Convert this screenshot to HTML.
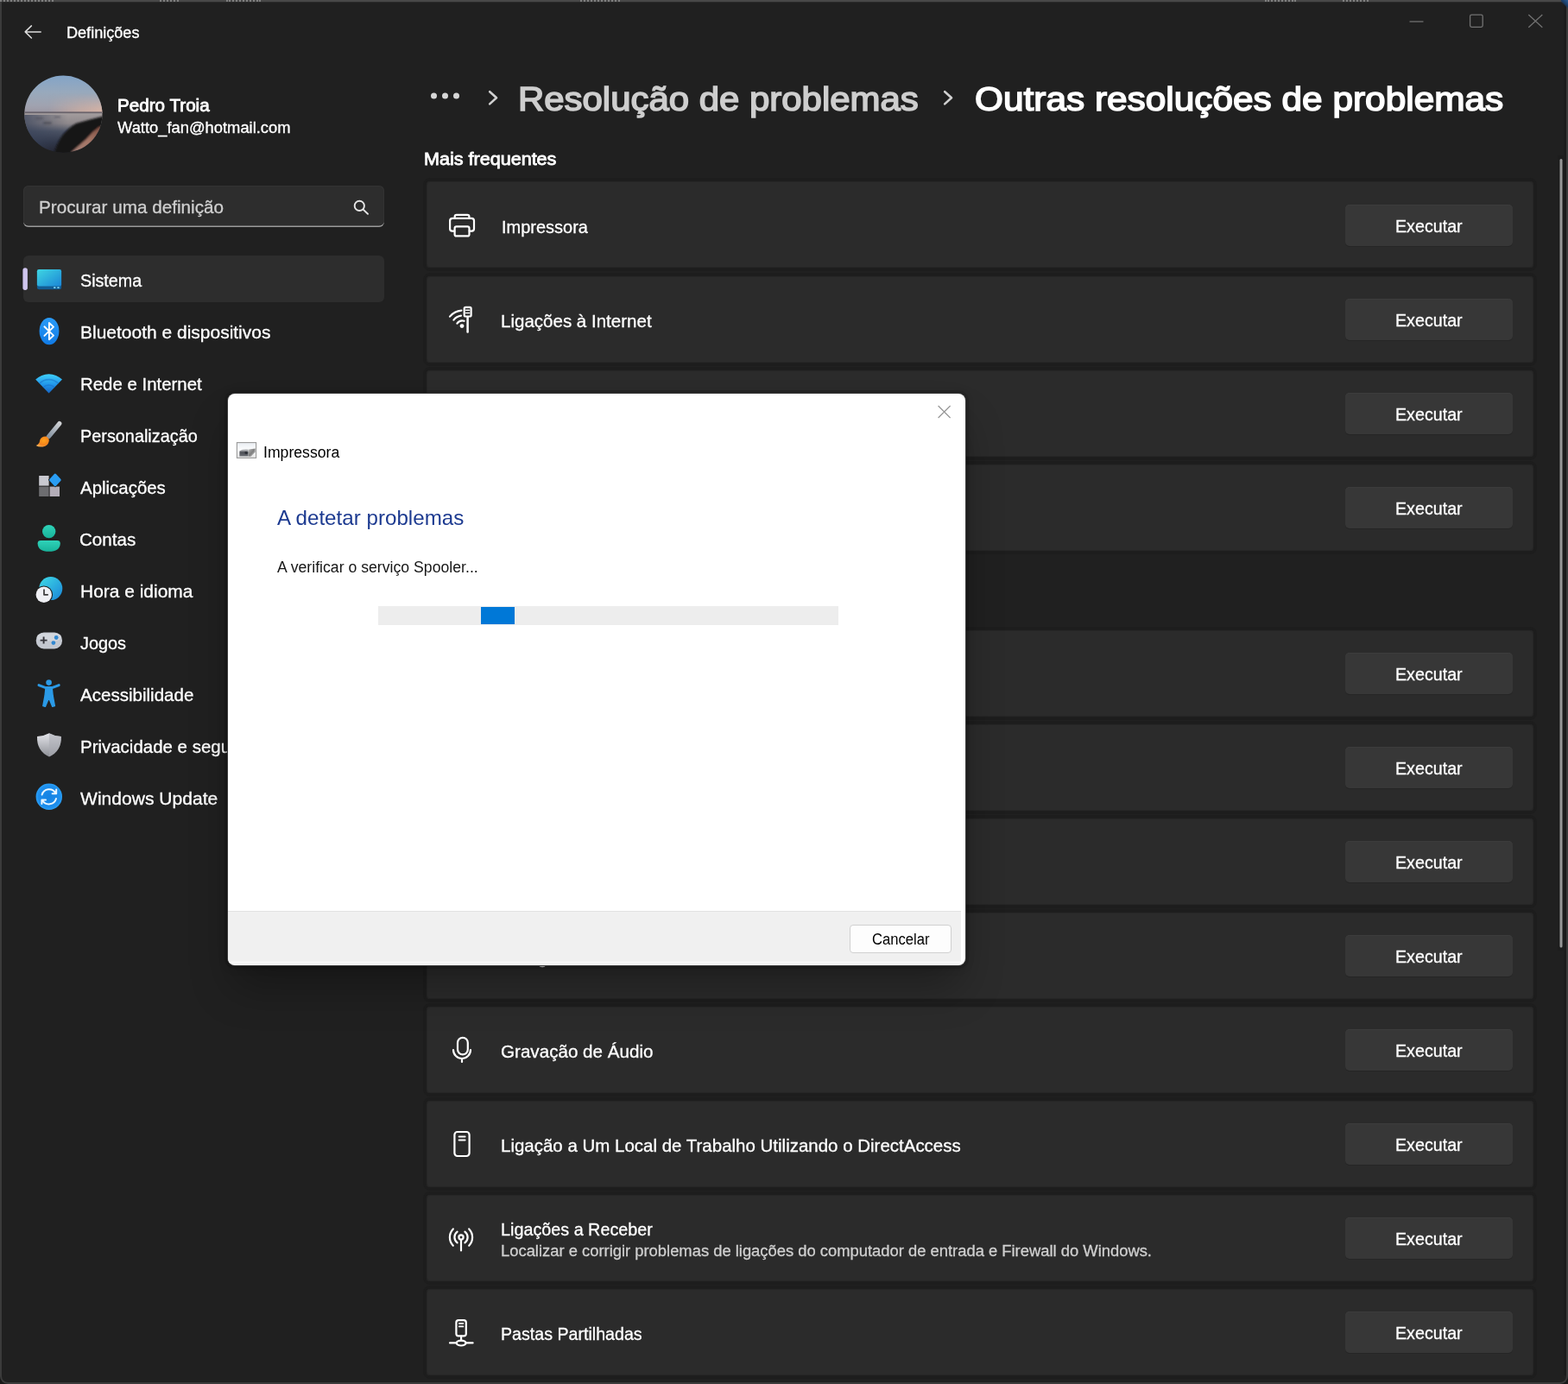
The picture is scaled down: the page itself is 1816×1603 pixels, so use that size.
<!DOCTYPE html>
<html lang="pt-PT"><head><meta charset="utf-8"><title>Definições - Outras resoluções de problemas</title>
<style>
html,body{margin:0;padding:0}
body{width:1816px;height:1603px;overflow:hidden;background:#181818;font-family:"Liberation Sans",sans-serif;position:relative}
ul,li,h1,h2,h3,p{margin:0;padding:0;list-style:none;font-weight:400}
.t{position:absolute;margin:0;white-space:nowrap;line-height:1;font-weight:400;transform-origin:0 0}
.abs{position:absolute}
button{position:absolute;margin:0;padding:0;border:0;background:none;font:inherit;color:inherit;text-align:left}
.card{position:absolute;left:494px;width:1282px;height:100px;background:#2b2b2b;border-radius:4px;box-shadow:inset 0 0 0 1px #262626,0 0 0 1px #1e1e1e,0 0 0 4px #1d1d1d}
.btn{left:1558px;width:194px;height:48px;background:#373737;border-radius:5px;box-shadow:inset 0 1px 0 #3c3c3c,0 1px 0 #252525}
svg.ov{position:absolute;left:0;top:0;pointer-events:none}
svg.defs{position:absolute;width:0;height:0}
.frame{left:0;top:0;width:1816px;height:1603px;box-sizing:border-box;border:2px solid #3b3b3b;border-top-color:#484848;border-radius:0 0 9px 9px;background:#202020}
.noise{top:0;height:3px;border-top:2px dotted #999;box-sizing:border-box;opacity:.7}
.selbg{left:27px;top:296px;width:418px;height:54px;background:#2d2d2d;border-radius:6px}
.searchbox{left:27px;top:215px;width:418px;height:48px;background:#2d2d2d;border-radius:6px;box-shadow:inset 0 -2px 0 -0.5px #9a9a9a, inset 0 0 0 1px #333}
.dialog{position:absolute;left:264px;top:456px;width:854px;height:662px;background:#fff;border-radius:8px;box-shadow:0 0 0 1px #3a3a3a,0 0 0 4px rgba(0,0,0,.1),0 2px 10px 2px rgba(0,0,0,.12),0 30px 50px -6px rgba(0,0,0,.3);overflow:hidden}
.dfoot{left:0;top:599px;width:849px;height:58px;background:#f0f0f0;border-top:1px solid #e2e2e2;border-bottom:1px solid #fff;box-shadow:0 2px 0 -1px #ececec}
.track{left:174px;top:246px;width:533px;height:22px;background:#ededed}
.chunk{left:119px;top:1px;width:39px;height:20px;background:#0078d7}
.cancel{left:720px;top:615px;width:116px;height:31px;background:#fdfdfd;border:1px solid #d0d0d0;border-radius:4px;box-sizing:content-box}
</style></head><body>
<svg class="defs" aria-hidden="true"><defs>
<linearGradient id="gSys" x1="0" y1="0" x2="1" y2="1"><stop offset="0" stop-color="#3fd6e2"/><stop offset="1" stop-color="#1b86d6"/></linearGradient>
<linearGradient id="gBt" x1="0" y1="0" x2="0" y2="1"><stop offset="0" stop-color="#2a9bf7"/><stop offset="1" stop-color="#117be6"/></linearGradient>
<linearGradient id="gWifi" x1="0" y1="0" x2="0" y2="1"><stop offset="0" stop-color="#3fd0fa"/><stop offset=".55" stop-color="#2196ea"/><stop offset="1" stop-color="#1766c4"/></linearGradient>
<linearGradient id="gAcc" x1="0" y1="0" x2="0" y2="1"><stop offset="0" stop-color="#2fd3b9"/><stop offset="1" stop-color="#18b39a"/></linearGradient>
<linearGradient id="gGlobe" x1="0" y1="0" x2="1" y2="1"><stop offset="0" stop-color="#3fdce6"/><stop offset="1" stop-color="#1a84d8"/></linearGradient>
<linearGradient id="gShield" x1="0" y1="0" x2="0" y2="1"><stop offset="0" stop-color="#e4e5ea"/><stop offset="1" stop-color="#8e9097"/></linearGradient>
<linearGradient id="gBrush" gradientUnits="userSpaceOnUse" x1="69" y1="490" x2="56" y2="506"><stop offset="0" stop-color="#cfd1d4"/><stop offset="1" stop-color="#8391a0"/></linearGradient>
<radialGradient id="gTip" cx=".6" cy=".4" r=".7"><stop offset="0" stop-color="#ffa21c"/><stop offset=".6" stop-color="#f5821c"/><stop offset="1" stop-color="#ffb75a"/></radialGradient>
<radialGradient id="gUpd" cx=".5" cy=".5" r=".5"><stop offset="0" stop-color="#1482e2"/><stop offset=".8" stop-color="#1c8dec"/><stop offset="1" stop-color="#2a9ff5"/></radialGradient>

<clipPath id="cAv"><ellipse cx="73.4" cy="132.3" rx="45.1" ry="44.7"/></clipPath>
<linearGradient id="gSky" x1="0" y1="0" x2="0" y2="1"><stop offset="0" stop-color="#82a4c8"/><stop offset=".45" stop-color="#98a9bc"/><stop offset=".8" stop-color="#a0a3b0"/><stop offset="1" stop-color="#9d97a2"/></linearGradient>
<linearGradient id="gGlow" x1="0" y1="0" x2="1" y2="0"><stop offset=".3" stop-color="#d9b3a0" stop-opacity="0"/><stop offset=".7" stop-color="#d6b2a2" stop-opacity=".75"/><stop offset="1" stop-color="#e2b9a6" stop-opacity=".95"/></linearGradient>
<linearGradient id="gGlowV" x1="0" y1="0" x2="0" y2="1"><stop offset="0" stop-color="#000" stop-opacity="1"/><stop offset=".5" stop-color="#000" stop-opacity="0"/></linearGradient>
<linearGradient id="gWat" x1="0" y1="0" x2="0" y2="1"><stop offset="0" stop-color="#a59e9f"/><stop offset=".26" stop-color="#8f898c"/><stop offset=".45" stop-color="#4e5566"/><stop offset=".72" stop-color="#2e3445"/><stop offset="1" stop-color="#1b1a22"/></linearGradient>
<linearGradient id="gWatL" x1="0" y1="0" x2="1" y2="0"><stop offset="0" stop-color="#39435a" stop-opacity=".75"/><stop offset=".55" stop-color="#39435a" stop-opacity="0"/></linearGradient>
<linearGradient id="gPath" x1="1" y1="0" x2="0" y2="1"><stop offset="0" stop-color="#7a4a3e"/><stop offset=".5" stop-color="#a57666"/><stop offset="1" stop-color="#a07c74"/></linearGradient>
<filter id="fAv" x="-10%" y="-10%" width="120%" height="120%"><feGaussianBlur stdDeviation=".8"/></filter>
<mask id="mGlow"><rect x="28" y="108" width="92" height="23" fill="url(#gMaskV)"/></mask>
<linearGradient id="gMaskV" x1="0" y1="0" x2="0" y2="1"><stop offset="0" stop-color="#000"/><stop offset="1" stop-color="#fff"/></linearGradient>

<linearGradient id="gPi" x1="0" y1="0" x2="0" y2="1"><stop offset="0" stop-color="#e9edf2"/><stop offset=".45" stop-color="#fbfcfd"/><stop offset="1" stop-color="#e4e4e4"/></linearGradient>
<linearGradient id="gPd" x1="0" y1="0" x2="0" y2="1"><stop offset="0" stop-color="#8a8d92" stop-opacity=".25"/><stop offset=".45" stop-color="#4a4d53"/><stop offset="1" stop-color="#6d7076"/></linearGradient>
<linearGradient id="gPs" x1="0" y1="0" x2="1" y2="1"><stop offset="0" stop-color="#b9b9b9"/><stop offset=".5" stop-color="#7f7f7f"/><stop offset="1" stop-color="#d8d8d8"/></linearGradient>
<filter id="fB" x="-20%" y="-20%" width="140%" height="140%"><feGaussianBlur stdDeviation=".55"/></filter>
</defs></svg>
<div class="window">
<div class="abs frame"></div>
<div class="abs" style="left:2px;top:2px;width:1812px;height:1px;background:#2b2b2b"></div>
<div class="abs noise" style="left:0px;width:62px"></div>
<div class="abs noise" style="left:185px;width:22px"></div>
<div class="abs noise" style="left:262px;width:40px"></div>
<div class="abs noise" style="left:672px;width:46px"></div>
<div class="abs noise" style="left:1465px;width:36px"></div>
<div class="abs noise" style="left:1555px;width:30px"></div>
<div class="abs" style="left:1811px;top:3px;width:3px;height:1590px;background:#1c1c1c"></div>
<div class="abs" style="left:1808px;top:0;width:8px;height:10px;background:linear-gradient(225deg,#2a5f9a 0,#1b3a60 45%,rgba(32,32,32,0) 60%)"></div>
<header class="titlebar">
<svg class="ov" role="img" aria-label="Voltar" width="1816" height="1603" viewBox="0 0 1816 1603"><g fill="none" stroke="#dcdcdc" stroke-width="1.5" stroke-linecap="round" stroke-linejoin="round">
<path d="M29.2 36.9H47.2M36.4 29.9L29.2 36.9L36.4 44"/>
</g></svg>
<span class="t" style="left:76.60px;top:29px;font-size:18px;color:#fff;-webkit-text-stroke:0.3px #fff;transform:scaleX(1.0048)">Definições</span>
<svg class="ov" role="img" aria-label="Minimizar Maximizar Fechar" width="1816" height="1603" viewBox="0 0 1816 1603"><g fill="none" stroke="#727272" stroke-width="1.3">
<path d="M1632.5 25H1648.5"/>
<rect x="1702.6" y="17.2" width="14.6" height="14.2" rx="1.8"/>
<path d="M1770.3 17L1786.3 31.8M1786.3 17L1770.3 31.8"/>
</g></svg>
</header>
<aside class="sidebar">
<section class="profile"><svg class="ov" role="img" aria-label="Pedro Troia" width="1816" height="1603" viewBox="0 0 1816 1603"><g clip-path="url(#cAv)">
<rect x="28" y="87" width="92" height="44" fill="url(#gSky)"/>
<rect x="28" y="108" width="92" height="23" fill="url(#gGlow)" mask="url(#mGlow)"/>
<rect x="28" y="130.4" width="92" height="48" fill="url(#gWat)"/>
<rect x="28" y="133" width="92" height="45" fill="url(#gWatL)"/>
<rect x="28" y="129.4" width="92" height="1.8" fill="#5d5862" opacity=".85"/>
<g filter="url(#fAv)">
<path d="M120 134.6Q104 138.6 88 143Q77 149.4 70.4 159.4Q65.6 167 62.6 178H120Z" fill="#141415"/>
<path d="M120 147.4L115.4 146.6Q106.4 153 99.6 161.6L82 176.8H92Q104 168.6 112.6 159.4Q117.4 153.4 120 147.4Z" fill="url(#gPath)"/>
<path d="M50 141.4H59.6V143.6H50ZM41 136.4H50V137.6H41ZM63 135H70V136H63Z" fill="#3a3c48" opacity=".75"/>
</g>
</g></svg><div class="t" style="left:135.88px;top:112px;font-size:20.2px;color:#fff;-webkit-text-stroke:0.81px #fff;transform:scaleX(1.0221)">Pedro Troia</div><div class="t" style="left:136.40px;top:139px;font-size:18px;color:#fff;-webkit-text-stroke:0.3px #fff;transform:scaleX(1.0194)">Watto_fan@hotmail.com</div></section>
<div class="search" role="search"><div class="abs searchbox"></div><span class="t" style="left:44.61px;top:229px;font-size:21px;color:#cfcfcf;-webkit-text-stroke:0.3px #cfcfcf;transform:scaleX(0.9861)">Procurar uma definição</span><svg class="ov" aria-hidden="true" width="1816" height="1603" viewBox="0 0 1816 1603"><g fill="none" stroke="#e6e6e6" stroke-width="1.9" stroke-linecap="round">
<circle cx="416.3" cy="238.4" r="5.6"/><path d="M420.6 242.6L426 247.8"/>
</g></svg></div>
<nav aria-label="Definições"><ul>
<li><div class="abs selbg"></div><svg class="ov" aria-hidden="true" width="1816" height="1603" viewBox="0 0 1816 1603"><rect x="26.4" y="310.2" width="5.5" height="25.8" rx="2.7" fill="#cfc5ee"/></svg><svg class="ov" aria-hidden="true" width="1816" height="1603" viewBox="0 0 1816 1603"><rect x="42.9" y="312.1" width="28.2" height="23.2" rx="2.4" fill="#125d94"/>
<rect x="42.9" y="312.1" width="28.2" height="19.3" rx="2.2" fill="url(#gSys)"/>
<rect x="62" y="332.2" width="2.6" height="1.8" rx=".8" fill="#7fd7f5"/><rect x="66.2" y="332.2" width="2.6" height="1.8" rx=".8" fill="#7fd7f5"/></svg><a class="t" style="left:92.76px;top:314px;font-size:21px;color:#fff;-webkit-text-stroke:0.3px #fff;transform:scaleX(0.9382)">Sistema</a></li>
<li><svg class="ov" aria-hidden="true" width="1816" height="1603" viewBox="0 0 1816 1603"><ellipse cx="57" cy="383.6" rx="11.4" ry="15.6" fill="url(#gBt)"/>
<path d="M51.4 378.3L62 388.6L56.9 393.2V374L62 378.6L51.4 388.9" fill="none" stroke="#fff" stroke-width="1.9" stroke-linejoin="round" stroke-linecap="round"/></svg><a class="t" style="left:93.30px;top:374px;font-size:21px;color:#fff;-webkit-text-stroke:0.3px #fff;transform:scaleX(0.9991)">Bluetooth e dispositivos</a></li>
<li><svg class="ov" aria-hidden="true" width="1816" height="1603" viewBox="0 0 1816 1603"><path d="M56.6 455.4L41.2 439.6A21.8 21.8 0 0 1 72 439.6Z" fill="url(#gWifi)"/>
<path d="M45.6 444.2A15.6 15.6 0 0 1 67.6 444.2M50 448.7A9.4 9.4 0 0 1 63.2 448.7" fill="none" stroke="#1a6fc8" stroke-opacity=".55" stroke-width="1.6"/></svg><a class="t" style="left:93.33px;top:434px;font-size:21px;color:#fff;-webkit-text-stroke:0.3px #fff;transform:scaleX(0.9722)">Rede e Internet</a></li>
<li><svg class="ov" aria-hidden="true" width="1816" height="1603" viewBox="0 0 1816 1603"><path d="M68.8 490.6L56.4 505.6" fill="none" stroke="url(#gBrush)" stroke-width="5.2" stroke-linecap="round"/>
<path d="M53.4 505.4Q57.6 507.4 56.6 511.6Q55.4 516.6 49.6 517.4Q45 518 41.6 516Q45.4 514.6 46 511Q47 505 53.4 505.4Z" fill="url(#gTip)"/></svg><a class="t" style="left:93.05px;top:494px;font-size:21px;color:#fff;-webkit-text-stroke:0.3px #fff;transform:scaleX(0.9451)">Personalização</a></li>
<li><svg class="ov" aria-hidden="true" width="1816" height="1603" viewBox="0 0 1816 1603"><rect x="45.2" y="551" width="11.4" height="11.6" fill="#c9c9d0"/>
<rect x="45.2" y="563.6" width="11.4" height="11.4" fill="#6d6d70"/>
<rect x="57.6" y="563.6" width="11.4" height="11.4" fill="#b3adb8"/>
<path d="M64 547L72.2 555.8L64 564.6L55.8 555.8Z" fill="#202020"/><path d="M63.9 550.4L69 555.9L63.9 561.4L58.8 555.9Z" fill="#2a9df4" stroke="#2a9df4" stroke-width="3.4" stroke-linejoin="round"/></svg><a class="t" style="left:92.90px;top:554px;font-size:21px;color:#fff;-webkit-text-stroke:0.3px #fff;transform:scaleX(0.9733)">Aplicações</a></li>
<li><svg class="ov" aria-hidden="true" width="1816" height="1603" viewBox="0 0 1816 1603"><circle cx="56.7" cy="615.6" r="7.7" fill="url(#gAcc)"/>
<path d="M47.4 626H66Q69.8 626 69.8 629.4Q69.4 638.8 56.7 638.8Q44 638.8 43.6 629.4Q43.6 626 47.4 626Z" fill="url(#gAcc)"/></svg><a class="t" style="left:92.22px;top:614px;font-size:21px;color:#fff;-webkit-text-stroke:0.3px #fff;transform:scaleX(0.9800)">Contas</a></li>
<li><svg class="ov" aria-hidden="true" width="1816" height="1603" viewBox="0 0 1816 1603"><circle cx="58.8" cy="681.6" r="13.5" fill="url(#gGlobe)"/>
<circle cx="50.8" cy="688.8" r="10.3" fill="#202020"/>
<circle cx="50.8" cy="688.8" r="9.2" fill="#eff0f4"/>
<path d="M51 683V688.8H55.2" fill="none" stroke="#3a3a3a" stroke-width="1.7" stroke-linecap="round" stroke-linejoin="round"/></svg><a class="t" style="left:93.30px;top:674px;font-size:21px;color:#fff;-webkit-text-stroke:0.3px #fff;transform:scaleX(0.9977)">Hora e idioma</a></li>
<li><svg class="ov" aria-hidden="true" width="1816" height="1603" viewBox="0 0 1816 1603"><rect x="41.8" y="732.6" width="30.2" height="18.8" rx="9" fill="#c4c8d0"/>
<rect x="42.6" y="733.4" width="28.6" height="9" rx="8" fill="#d9dce2" opacity=".7"/>
<path d="M46.6 741.6H54.6M50.6 737.6V745.6" stroke="#34343a" stroke-width="1.9" fill="none"/>
<circle cx="65.2" cy="738.5" r="2.4" fill="#3388d0"/><circle cx="61.9" cy="744.6" r="2.4" fill="#3388d0"/></svg><a class="t" style="left:93.00px;top:734px;font-size:21px;color:#fff;-webkit-text-stroke:0.3px #fff;transform:scaleX(0.9464)">Jogos</a></li>
<li><svg class="ov" aria-hidden="true" width="1816" height="1603" viewBox="0 0 1816 1603"><g fill="#2b9ae6" stroke="#2b9ae6" stroke-linejoin="round" stroke-linecap="round">
<circle cx="56.6" cy="790.6" r="3.3" stroke="none"/>
<path d="M45 793.6L53 796.6H60.2L68.2 793.6" fill="none" stroke-width="3"/>
<path d="M53 796.6H60.2L61.2 806L63.4 817.6L60.8 818.4L56.6 808.4L52.4 818.4L49.8 817.6L52 806Z" stroke-width="1.4"/>
</g></svg><a class="t" style="left:92.90px;top:794px;font-size:21px;color:#fff;-webkit-text-stroke:0.3px #fff;transform:scaleX(0.9784)">Acessibilidade</a></li>
<li><svg class="ov" aria-hidden="true" width="1816" height="1603" viewBox="0 0 1816 1603"><path d="M56.9 849.2Q63.6 852.8 70.8 853Q71.4 870 56.9 876.4Q42.4 870 43 853Q50.2 852.8 56.9 849.2Z" fill="url(#gShield)"/>
<path d="M56.9 849.2Q63.6 852.8 70.8 853Q71.4 870 56.9 876.4Z" fill="#a9abb2" opacity=".55"/></svg><a class="t" style="left:93.33px;top:854px;font-size:21px;color:#fff;-webkit-text-stroke:0.3px #fff;transform:scaleX(0.9745)">Privacidade e segurança</a></li>
<li><svg class="ov" aria-hidden="true" width="1816" height="1603" viewBox="0 0 1816 1603"><circle cx="56.8" cy="922.8" r="15.2" fill="url(#gUpd)"/>
<g fill="none" stroke="#e9f6ff" stroke-width="2" stroke-linecap="round" stroke-linejoin="round">
<path d="M48.6 920.6A8.6 8.6 0 0 1 64.4 918.6M65.2 914.6V919.2H60.6"/>
<path d="M65 925A8.6 8.6 0 0 1 49.2 927M48.4 931V926.4H53"/>
</g></svg><a class="t" style="left:93.00px;top:914px;font-size:21px;color:#fff;-webkit-text-stroke:0.3px #fff;transform:scaleX(1.0032)">Windows Update</a></li>
</ul></nav></aside>
<main>
<nav class="crumbs" aria-label="Localização"><svg class="ov" aria-hidden="true" width="1816" height="1603" viewBox="0 0 1816 1603"><g fill="#d6d6d6"><circle cx="502.5" cy="111" r="3.5"/><circle cx="515.5" cy="111" r="3.5"/><circle cx="528.5" cy="111" r="3.5"/></g></svg><svg class="ov" aria-hidden="true" width="1816" height="1603" viewBox="0 0 1816 1603"><g fill="none" stroke="#d0d0d0" stroke-width="2.6" stroke-linecap="round" stroke-linejoin="round"><path d="M567.2 106.2L575 113.3L567.2 120.4"/></g></svg><a class="t" style="left:599.68px;top:95px;font-size:39.6px;color:#cecece;-webkit-text-stroke:1.58px #cecece;transform:scaleX(1.0592)">Resolução de problemas</a><svg class="ov" aria-hidden="true" width="1816" height="1603" viewBox="0 0 1816 1603"><g fill="none" stroke="#d0d0d0" stroke-width="2.6" stroke-linecap="round" stroke-linejoin="round"><path d="M1094.2 106.2L1102 113.3L1094.2 120.4"/></g></svg><h1 class="t" style="left:1128.53px;top:95px;font-size:39.6px;color:#fff;-webkit-text-stroke:1.58px #fff;transform:scaleX(1.0704)">Outras resoluções de problemas</h1></nav>
<section><h2 class="t" style="left:490.76px;top:174px;font-size:20.8px;color:#fff;-webkit-text-stroke:0.83px #fff;transform:scaleX(1.0367)">Mais frequentes</h2><ul><li><div class="card" style="top:210px"></div><svg class="ov" aria-hidden="true" width="1816" height="1603" viewBox="0 0 1816 1603"><g fill="none" stroke="#fff" stroke-width="2.2" stroke-linecap="round" stroke-linejoin="round"><path d="M526.4 267.6H523.6Q521.1 267.6 521.1 265.1V255.8Q521.1 252.8 524.1 252.8H546Q549 252.8 549 255.8V265.1Q549 267.6 546.5 267.6H543.6"/>
<path d="M526.7 252.8V250.8Q526.7 248.8 528.7 248.8H541.4Q543.4 248.8 543.4 250.8V252.8"/>
<rect x="526.6" y="262.4" width="16.9" height="11" rx="2"/></g></svg><span class="t" style="left:580.85px;top:252px;font-size:21px;color:#fff;-webkit-text-stroke:0.3px #fff;transform:scaleX(0.9514)">Impressora</span><button type="button" class="btn" style="top:237px"><span class="t" style="left:58.26px;top:14px;font-size:21px;color:#fff;-webkit-text-stroke:0.3px #fff;transform:scaleX(0.9366)">Executar</span></button></li><li><div class="card" style="top:320px"></div><svg class="ov" aria-hidden="true" width="1816" height="1603" viewBox="0 0 1816 1603"><g fill="none" stroke="#fff" stroke-width="2.2" stroke-linecap="round" stroke-linejoin="round"><rect x="537.7" y="355.9" width="7.9" height="10.6" rx="1.6"/>
<path d="M539.6 359.2H543.6M539.6 362.6H543.6" stroke-width="1.5"/>
<path d="M541.6 367.5V384.6" stroke-width="2.5"/>
<path d="M521 366.6A19.4 19.4 0 0 1 534.4 359.6M525.4 370.6A13.4 13.4 0 0 1 534 365.6M529.4 374.6A7.6 7.6 0 0 1 537.6 371.8"/>
<circle cx="535" cy="377.6" r="2.4" fill="#fff" stroke="none"/></g></svg><span class="t" style="left:580.02px;top:361px;font-size:21px;color:#fff;-webkit-text-stroke:0.3px #fff;transform:scaleX(0.9775)">Ligações à Internet</span><button type="button" class="btn" style="top:346px"><span class="t" style="left:58.26px;top:14px;font-size:21px;color:#fff;-webkit-text-stroke:0.3px #fff;transform:scaleX(0.9366)">Executar</span></button></li><li><div class="card" style="top:429px"></div><span class="t" style="left:580.06px;top:470px;font-size:21px;color:#fff;-webkit-text-stroke:0.3px #fff;transform:scaleX(0.9400)">Reprodução de Áudio</span><button type="button" class="btn" style="top:455px"><span class="t" style="left:58.26px;top:14px;font-size:21px;color:#fff;-webkit-text-stroke:0.3px #fff;transform:scaleX(0.9366)">Executar</span></button></li><li><div class="card" style="top:538px"></div><span class="t" style="left:581.00px;top:579px;font-size:21px;color:#fff;-webkit-text-stroke:0.3px #fff;transform:scaleX(0.9400)">Windows Update</span><button type="button" class="btn" style="top:564px"><span class="t" style="left:58.26px;top:14px;font-size:21px;color:#fff;-webkit-text-stroke:0.3px #fff;transform:scaleX(0.9366)">Executar</span></button></li></ul></section>
<section><h2 class="t" style="left:491.80px;top:694px;font-size:20.8px;color:#fff;-webkit-text-stroke:0.83px #fff;transform:scaleX(0.9400)">Outras</h2><ul><li><div class="card" style="top:730px"></div><span class="t" style="left:581.00px;top:771px;font-size:21px;color:#fff;-webkit-text-stroke:0.3px #fff;transform:scaleX(0.9400)">Adaptador de Rede</span><button type="button" class="btn" style="top:756px"><span class="t" style="left:58.26px;top:14px;font-size:21px;color:#fff;-webkit-text-stroke:0.3px #fff;transform:scaleX(0.9366)">Executar</span></button></li><li><div class="card" style="top:839px"></div><span class="t" style="left:580.06px;top:880px;font-size:21px;color:#fff;-webkit-text-stroke:0.3px #fff;transform:scaleX(0.9400)">Bluetooth</span><button type="button" class="btn" style="top:865px"><span class="t" style="left:58.26px;top:14px;font-size:21px;color:#fff;-webkit-text-stroke:0.3px #fff;transform:scaleX(0.9366)">Executar</span></button></li><li><div class="card" style="top:948px"></div><span class="t" style="left:580.06px;top:989px;font-size:21px;color:#fff;-webkit-text-stroke:0.3px #fff;transform:scaleX(0.9400)">Câmara</span><button type="button" class="btn" style="top:974px"><span class="t" style="left:58.26px;top:14px;font-size:21px;color:#fff;-webkit-text-stroke:0.3px #fff;transform:scaleX(0.9366)">Executar</span></button></li><li><div class="card" style="top:1057px"></div><span class="t" style="left:580.86px;top:1098px;font-size:21px;color:#fff;-webkit-text-stroke:0.3px #fff;transform:scaleX(0.9400)">Energia</span><button type="button" class="btn" style="top:1083px"><span class="t" style="left:58.26px;top:14px;font-size:21px;color:#fff;-webkit-text-stroke:0.3px #fff;transform:scaleX(0.9366)">Executar</span></button></li><li><div class="card" style="top:1166px"></div><svg class="ov" aria-hidden="true" width="1816" height="1603" viewBox="0 0 1816 1603"><g fill="none" stroke="#fff" stroke-width="2.2" stroke-linecap="round" stroke-linejoin="round"><rect x="530" y="1201.8" width="11.8" height="19.6" rx="5.9"/>
<path d="M525 1216A10 10 0 0 0 545 1216M535 1226.4V1230"/></g></svg><span class="t" style="left:579.82px;top:1207px;font-size:21px;color:#fff;-webkit-text-stroke:0.3px #fff;transform:scaleX(0.9815)">Gravação de Áudio</span><button type="button" class="btn" style="top:1192px"><span class="t" style="left:58.26px;top:14px;font-size:21px;color:#fff;-webkit-text-stroke:0.3px #fff;transform:scaleX(0.9366)">Executar</span></button></li><li><div class="card" style="top:1275px"></div><svg class="ov" aria-hidden="true" width="1816" height="1603" viewBox="0 0 1816 1603"><g fill="none" stroke="#fff" stroke-width="2.2" stroke-linecap="round" stroke-linejoin="round"><rect x="526.4" y="1311" width="17.2" height="28" rx="3.4"/>
<path d="M531.6 1316.4H538.6M531.6 1320.4H538.6" stroke-width="2"/></g></svg><span class="t" style="left:580.02px;top:1316px;font-size:21px;color:#fff;-webkit-text-stroke:0.3px #fff;transform:scaleX(0.9752)">Ligação a Um Local de Trabalho Utilizando o DirectAccess</span><button type="button" class="btn" style="top:1301px"><span class="t" style="left:58.26px;top:14px;font-size:21px;color:#fff;-webkit-text-stroke:0.3px #fff;transform:scaleX(0.9366)">Executar</span></button></li><li><div class="card" style="top:1384px"></div><svg class="ov" aria-hidden="true" width="1816" height="1603" viewBox="0 0 1816 1603"><g fill="none" stroke="#fff" stroke-width="2.2" stroke-linecap="round" stroke-linejoin="round"><circle cx="534" cy="1433" r="2.6"/>
<path d="M534 1436V1448.4"/>
<path d="M529.6 1426.6A8 8 0 0 0 529.6 1439.4M538.4 1426.6A8 8 0 0 1 538.4 1439.4"/>
<path d="M524.8 1423.4A14 14 0 0 0 524.8 1442.8M543.2 1423.4A14 14 0 0 1 543.2 1442.8"/></g></svg><span class="t" style="left:580.06px;top:1413px;font-size:21px;color:#fff;-webkit-text-stroke:0.3px #fff;transform:scaleX(0.9414)">Ligações a Receber</span><span class="t" style="left:579.98px;top:1440px;font-size:18px;color:#cfcfcf;-webkit-text-stroke:0.3px #cfcfcf;transform:scaleX(1.0211)">Localizar e corrigir problemas de ligações do computador de entrada e Firewall do Windows.</span><button type="button" class="btn" style="top:1410px"><span class="t" style="left:58.26px;top:14px;font-size:21px;color:#fff;-webkit-text-stroke:0.3px #fff;transform:scaleX(0.9366)">Executar</span></button></li><li><div class="card" style="top:1493px"></div><svg class="ov" aria-hidden="true" width="1816" height="1603" viewBox="0 0 1816 1603"><g fill="none" stroke="#fff" stroke-width="2.2" stroke-linecap="round" stroke-linejoin="round"><rect x="528.4" y="1529.2" width="11.4" height="18.2" rx="2.6"/>
<path d="M531.8 1532.8H536.4M531.8 1536.4H536.4" stroke-width="1.7"/>
<path d="M534.1 1547.6V1552.6M521 1555.4H528.6M539.6 1555.4H547.6"/>
<ellipse cx="534.1" cy="1555.6" rx="5.4" ry="2.9"/></g></svg><span class="t" style="left:580.47px;top:1534px;font-size:21px;color:#fff;-webkit-text-stroke:0.3px #fff;transform:scaleX(0.9345)">Pastas Partilhadas</span><button type="button" class="btn" style="top:1519px"><span class="t" style="left:58.26px;top:14px;font-size:21px;color:#fff;-webkit-text-stroke:0.3px #fff;transform:scaleX(0.9366)">Executar</span></button></li></ul></section>
<div class="abs" style="left:1804px;top:180px;width:8px;height:921px;background:#1d1d1d"></div>
<svg class="ov" aria-hidden="true" width="1816" height="1603" viewBox="0 0 1816 1603"><rect x="1806.5" y="184" width="3" height="913.4" rx="1.5" fill="#979797"/></svg>
</main></div>
<div class="dialog" role="dialog" aria-label="Impressora">
<svg class="ov" role="img" aria-label="Fechar" width="1816" height="1603" viewBox="0 0 1816 1603" style="left:-264px;top:-456px"><path d="M1086.6 470L1100.6 484M1100.6 470L1086.6 484" fill="none" stroke="#969696" stroke-width="1.2"/></svg>
<svg class="ov" aria-hidden="true" width="1816" height="1603" viewBox="0 0 1816 1603" style="left:-264px;top:-456px"><rect x="274.4" y="512.6" width="22.2" height="17.8" fill="url(#gPi)" stroke="#9a9a9a" stroke-width="1.1"/>
<g filter="url(#fB)">
<path d="M277.4 528.6V522.4Q281.6 519.2 287.6 520.2V528.6Z" fill="url(#gPd)"/>
<path d="M287.8 528.8L288.2 520.4L295.6 519.6V523.6L290.6 528.8Z" fill="url(#gPs)"/>
<path d="M283.4 523.4Q285.6 522 287.4 524.4Q286 526.6 283.6 525.6Z" fill="#2c2f35"/>
</g></svg>
<span class="t" style="left:41.22px;top:59px;font-size:18px;color:#000;transform:scaleX(0.9798)">Impressora</span>
<h2 class="t" style="left:57.40px;top:133px;font-size:23.6px;color:#1c3a90;transform:scaleX(1.0246)">A detetar problemas</h2>
<p class="t" style="left:57.40px;top:192px;font-size:18px;color:#161616;transform:scaleX(0.9814)">A verificar o serviço Spooler...</p>
<div class="abs track" role="progressbar"><div class="abs chunk"></div></div>
<div class="abs dfoot"></div>
<button type="button" class="cancel"><span class="t" style="left:24.58px;top:7px;font-size:18px;color:#000;transform:scaleX(0.9225)">Cancelar</span></button>
</div>
</body></html>
